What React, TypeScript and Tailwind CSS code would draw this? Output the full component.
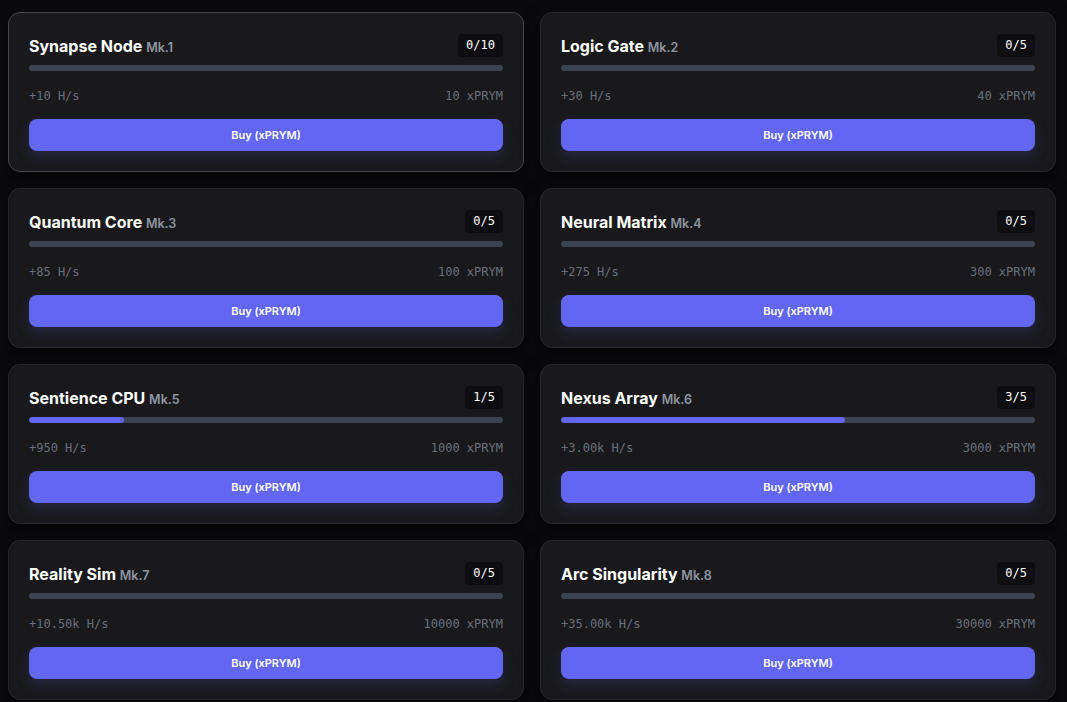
import React from 'react';

interface Upgrade {
  name: string;
  mk: number;
  owned: number;
  max: number;
  rate: string;
  cost: number;
}

const upgrades: Upgrade[] = [
  { name: 'Synapse Node', mk: 1, owned: 0, max: 10, rate: '+10 H/s', cost: 10 },
  { name: 'Logic Gate', mk: 2, owned: 0, max: 5, rate: '+30 H/s', cost: 40 },
  { name: 'Quantum Core', mk: 3, owned: 0, max: 5, rate: '+85 H/s', cost: 100 },
  { name: 'Neural Matrix', mk: 4, owned: 0, max: 5, rate: '+275 H/s', cost: 300 },
  { name: 'Sentience CPU', mk: 5, owned: 1, max: 5, rate: '+950 H/s', cost: 1000 },
  { name: 'Nexus Array', mk: 6, owned: 3, max: 5, rate: '+3.00k H/s', cost: 3000 },
  { name: 'Reality Sim', mk: 7, owned: 0, max: 5, rate: '+10.50k H/s', cost: 10000 },
  { name: 'Arc Singularity', mk: 8, owned: 0, max: 5, rate: '+35.00k H/s', cost: 30000 },
];

const mono = { fontFamily: '"DejaVu Sans Mono", "Liberation Mono", monospace' };

function UpgradeCard({ item, active }: { item: Upgrade; active?: boolean }) {
  const pct = (item.owned / item.max) * 100;
  return (
    <div
      className={`rounded-xl border bg-[#19191c] px-5 pt-5 pb-5 shadow-[0_6px_18px_rgba(0,0,0,0.5)] ${
        active ? 'border-[#48484f]' : 'border-[#27272b]'
      }`}
    >
      {/* title row */}
      <div className="flex items-center justify-between h-6">
        <h3 className="pt-[2px] text-[16px] font-bold text-white">
          {item.name} <span className="text-[12.5px] font-semibold text-[#8f95a0]">Mk.{item.mk}</span>
        </h3>
        <span
          className="rounded bg-[#0e0e10] px-2 py-[3px] text-[12px] leading-[17px] text-white"
          style={mono}
        >
          {item.owned}/{item.max}
        </span>
      </div>

      {/* progress */}
      <div className="mt-2 h-1.5 w-full rounded-full bg-[#3d4350] overflow-hidden">
        <div className="h-full rounded-full bg-[#6366f1]" style={{ width: `${pct}%` }} />
      </div>

      {/* stats */}
      <div className="mt-4 flex items-center justify-between text-[12px] text-[#6b6f78]" style={mono}>
        <span>{item.rate}</span>
        <span>{item.cost} xPRYM</span>
      </div>

      <button className="mt-[14px] h-8 w-full rounded-lg bg-[#6366f1] text-[11px] font-semibold text-white shadow-[0_6px_14px_rgba(99,102,241,0.18)]">
        Buy (xPRYM)
      </button>
    </div>
  );
}

export default function App() {
  return (
    <div
      className="min-h-screen bg-[#0b0b0d] pl-2 pr-[11px] pt-3 pb-4"
      style={{ fontFamily: 'Inter, "Noto Sans", sans-serif' }}
    >
      <div className="grid grid-cols-2 gap-4">
        {upgrades.map((u, i) => (
          <UpgradeCard key={u.name} item={u} active={i === 0} />
        ))}
      </div>
    </div>
  );
}
